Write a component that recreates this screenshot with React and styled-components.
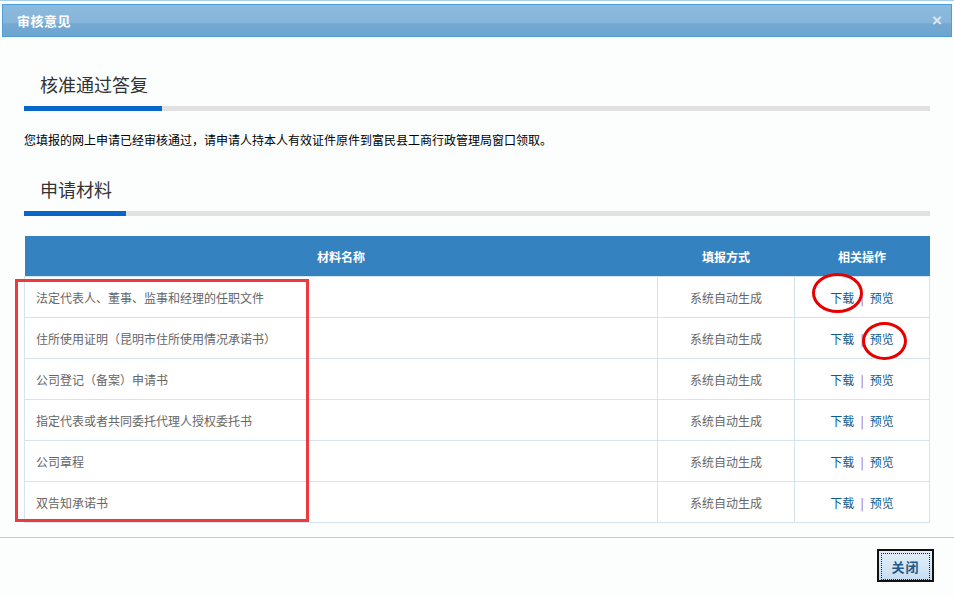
import React from "react";
import styled, { createGlobalStyle } from "styled-components";

const GlobalStyle = createGlobalStyle`
  html, body {
    margin: 0;
    padding: 0;
    background: #fcfefe;
  }
  body {
    font-family: "Noto Sans CJK SC", "Liberation Sans", sans-serif;
    font-size: 12px;
    color: #000;
  }
`;

const materials = [
  "法定代表人、董事、监事和经理的任职文件",
  "住所使用证明（昆明市住所使用情况承诺书）",
  "公司登记（备案）申请书",
  "指定代表或者共同委托代理人授权委托书",
  "公司章程",
  "双告知承诺书"
];

export default function App() {
  return (
    <>
      <GlobalStyle />
      <Page>
        <TopLine />
        <TitleBar>
          <TitleText>审核意见</TitleText>
          <CloseX>×</CloseX>
        </TitleBar>

        <Content>
          <SectionTitle>核准通过答复</SectionTitle>
          <Bar $accent={138} />
          <Message>
            您填报的网上申请已经审核通过，请申请人持本人有效证件原件到富民县工商行政管理局窗口领取。
          </Message>

          <SectionTitle $gap={27}>申请材料</SectionTitle>
          <Bar $accent={102} />

          <Table>
            <thead>
              <tr>
                <Th>材料名称</Th>
                <Th $w={137}>填报方式</Th>
                <Th $w={135}>相关操作</Th>
              </tr>
            </thead>
            <tbody>
              {materials.map(name => (
                <tr key={name}>
                  <Td>{name}</Td>
                  <Td $center>系统自动生成</Td>
                  <Td $center>
                    <OpLink href="#">下载</OpLink>
                    <Sep>|</Sep>
                    <OpLink href="#">预览</OpLink>
                  </Td>
                </tr>
              ))}
            </tbody>
          </Table>
        </Content>

        <Footer>
          <CloseButton>
            <span>关闭</span>
          </CloseButton>
        </Footer>

        <MarkBox />
        <MarkOval $x={812} $y={273} $w={51} $h={40} />
        <MarkOval $x={862} $y={322} $w={45} $h={38} />
      </Page>
    </>
  );
}

const Page = styled.div`
  position: relative;
  width: 954px;
  height: 596px;
  overflow: hidden;
`;

const TopLine = styled.div`
  height: 1px;
  background: #a9cdea;
  margin-bottom: 3px;
`;

const TitleBar = styled.div`
  margin: 0 2px;
  height: 31px;
  border: 1px solid #4b9fdc;
  background:
    linear-gradient(178deg, rgba(255, 255, 255, 0) 55%, rgba(0, 0, 0, 0) 55%),
    linear-gradient(180deg, #8cbadd 0%, #87b6da 55%, #73a8d1 62%, #6ea5cf 100%);
  display: flex;
  align-items: center;
  justify-content: space-between;
  padding: 0 9px 0 14px;
`;

const TitleText = styled.span`
  color: #fff;
  font-weight: bold;
  font-size: 13px;
  letter-spacing: 0.5px;
`;

const CloseX = styled.span`
  color: #dbe8f3;
  font-family: "Liberation Sans", sans-serif;
  font-weight: bold;
  font-size: 17px;
  line-height: 1;
`;

const Content = styled.div`
  padding: 35px 24px 0;
`;

const SectionTitle = styled.h2`
  margin: ${p => p.$gap || 0}px 0 0;
  padding-left: 16px;
  font-size: 18px;
  font-weight: normal;
  line-height: 24px;
  color: #333;
`;

const Bar = styled.div`
  margin-top: 10px;
  height: 5px;
  background: linear-gradient(
    90deg,
    #0766c8 0,
    #0766c8 ${p => p.$accent}px,
    #e1e1e1 ${p => p.$accent}px
  );
`;

const Message = styled.p`
  margin: 19px 0 0;
  line-height: 20px;
  font-size: 12px;
  color: #000;
`;

const Table = styled.table`
  margin-top: 20px;
  width: 906px;
  border-collapse: collapse;
  table-layout: fixed;
`;

const Th = styled.th`
  height: 40px;
  padding: 0;
  width: ${p => (p.$w ? `${p.$w}px` : "auto")};
  background: #3483c0;
  color: #fff;
  font-size: 12px;
  font-weight: bold;
  text-align: center;
`;

const Td = styled.td`
  height: 40px;
  padding: 0 0 0 ${p => (p.$center ? 0 : 11)}px;
  border: 1px solid #d5e3ec;
  background: #fff;
  color: #666;
  font-size: 12px;
  text-align: ${p => (p.$center ? "center" : "left")};
`;

const OpLink = styled.a`
  color: #0f5c8e;
  text-decoration: none;
`;

const Sep = styled.span`
  color: #9a6290;
  margin: 0 6px;
`;

const Footer = styled.div`
  margin-top: 14px;
  border-top: 1px solid #b6cee0;
  display: flex;
  justify-content: flex-end;
  padding: 11px 20px 0 0;
`;

const CloseButton = styled.button`
  width: 57px;
  height: 33px;
  padding: 2px;
  border: 2px solid #111;
  background: linear-gradient(180deg, #e2eef9 0%, #d6e7f6 50%, #c7dcf0 100%);
  cursor: pointer;

  span {
    display: flex;
    align-items: center;
    justify-content: center;
    height: 100%;
    border: 1px dotted #222;
    font-family: "Noto Sans CJK SC", sans-serif;
    font-size: 13px;
    font-weight: bold;
    color: #1f5a8a;
    letter-spacing: 1px;
  }
`;

const MarkBox = styled.div`
  position: absolute;
  left: 15px;
  top: 279px;
  width: 288px;
  height: 237px;
  border: 3px solid #ec3a3e;
  pointer-events: none;
`;

const MarkOval = styled.div`
  position: absolute;
  left: ${p => p.$x}px;
  top: ${p => p.$y}px;
  width: ${p => p.$w - 6}px;
  height: ${p => p.$h - 6}px;
  border: 3px solid #e60000;
  border-radius: 50%;
  pointer-events: none;
`;
